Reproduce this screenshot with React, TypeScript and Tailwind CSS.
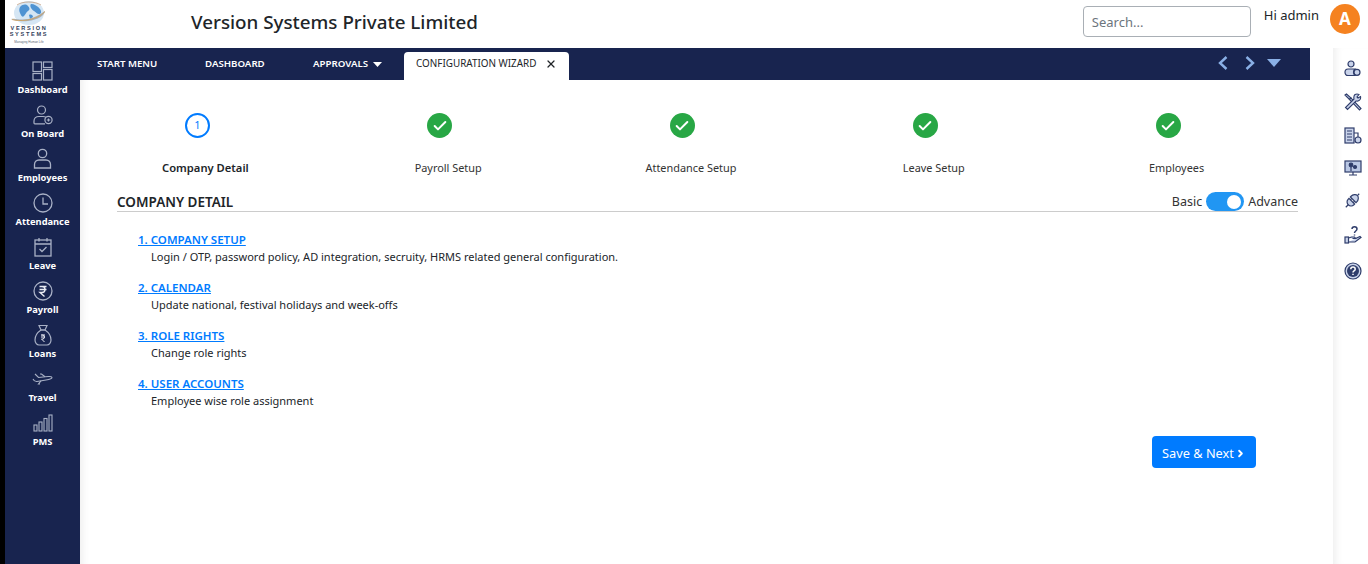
import { Check, ChevronRight, X } from 'lucide-react'

const font = "font-['Noto_Sans','Open_Sans',sans-serif]"

// Left menu icons
const DashboardIcon = () => (
  <svg width="21" height="20" viewBox="0 0 21 20" fill="none" stroke="#a9b1c6" strokeWidth="1.200">
    <rect x="1" y="1" width="8.500" height="9.500" />
    <rect x="11.500" y="1" width="8.500" height="5.500" />
    <rect x="1" y="12.500" width="8.500" height="6.500" />
    <rect x="11.500" y="8.500" width="8.500" height="10.500" />
  </svg>
)

const OnBoardIcon = () => (
  <svg width="22" height="20" viewBox="0 0 22 20" fill="none" stroke="#a9b1c6" strokeWidth="1.200">
    <circle cx="9.500" cy="5" r="4" />
    <path d="M14 12.200c-1-.5-2-.7-3-.7H7c-3 0-5 2-5 4.500V18c0 .5.3.8.8.8H13" />
    <circle cx="16.500" cy="15" r="3.600" />
    <path d="M14.800 15h3.400M16.500 13.400v3.200" />
  </svg>
)

const EmployeesIcon = () => (
  <svg width="19" height="21" viewBox="0 0 18 21" fill="none" stroke="#a9b1c6" strokeWidth="1.300">
    <circle cx="9" cy="5.500" r="4.200" />
    <path d="M5.500 12h7c2.700 0 4.500 2 4.500 4.500V20H1v-3.500C1 14 2.800 12 5.500 12z" />
  </svg>
)

const AttendanceIcon = () => (
  <svg width="20" height="20" viewBox="0 0 20 20" fill="none" stroke="#a9b1c6" strokeWidth="1.300">
    <circle cx="10" cy="10" r="9" />
    <path d="M10 4.500V11h5" />
  </svg>
)

const LeaveIcon = () => (
  <svg width="18" height="20" viewBox="0 0 18 20" fill="none" stroke="#a9b1c6" strokeWidth="1.300">
    <rect x="1" y="3" width="16" height="16" />
    <path d="M1 7h16M5 1v3.500M13 1v3.500" />
    <path d="M5.500 12l2.500 2.500 4.500-4.500" />
  </svg>
)

const PayrollIcon = () => (
  <svg width="20" height="20" viewBox="0 0 20 20" fill="none" stroke="#a9b1c6" strokeWidth="1.300">
    <circle cx="10" cy="10" r="9" />
    <path d="M6.500 5.500h7M6.500 8.500h7M7 5.500h2a3 3 0 0 1 0 6H7l4.500 4" stroke="#e8eaf2" strokeWidth="1.400" />
  </svg>
)

const LoansIcon = () => (
  <svg width="18" height="22" viewBox="0 0 18 22" fill="none" stroke="#a9b1c6" strokeWidth="1.200">
    <path d="M5 1.500h8l-2 4.500H7z" />
    <path d="M7 6h4c3 2 6 6 6 10 0 3-2 5-4 5H5c-2 0-4-2-4-5 0-4 3-8 6-10z" />
    <path d="M7 11h4M7 13h4M7.500 11h1a2 2 0 0 1 0 4h-1l3 3" stroke="#e8eaf2" strokeWidth="1" />
  </svg>
)

const TravelIcon = () => (
  <svg width="21" height="12" viewBox="0 0 21 12" fill="none" stroke="#a9b1c6" strokeWidth="1.100">
    <path d="M3 1l3.500 3.500 7-.8c3-.4 6.500-.2 6.500.8s-3 2-6 2.500L5 8.500c-1.500.2-3-.5-4-2.500" />
    <path d="M8 1h1.500l3.500 2.800M9 7.800L6.500 11h1.500" />
  </svg>
)

const PmsIcon = () => (
  <svg width="20" height="18" viewBox="0 0 20 18" fill="none" stroke="#a9b1c6" strokeWidth="1.100">
    <rect x="1" y="11" width="3" height="6" />
    <rect x="6" y="8" width="3" height="9" />
    <rect x="11" y="4.500" width="3" height="12.500" />
    <rect x="16" y="1" width="3" height="16" />
  </svg>
)

// Right rail icons
const RailUser = () => (
  <svg width="17" height="17" viewBox="0 0 17 17" fill="#c9d3ea" stroke="#2f3d6b" strokeWidth="1.200">
    <circle cx="7" cy="4" r="3" />
    <path d="M4 9h7c-1 1-1.500 2-1.500 3.200S10 14.500 11 15.500H4c-2 0-3-1.500-3-3.200S2 9 4 9z" />
    <circle cx="13" cy="12.300" r="3" />
  </svg>
)

const RailTools = () => (
  <svg width="18" height="18" viewBox="0 0 18 18" fill="#c9d3ea" stroke="#2f3d6b" strokeWidth="1.100">
    <path d="M1 2l1.500-1L7 5 5.500 6.500z" />
    <path d="M5.500 6.500L7 5l10 10.500L15.500 17z" />
    <path d="M11 1.500c2-1 4 0 4 0l-2 2.500 1 1 2.500-1.500c.5 2-.5 4-2.500 4.500-1 .2-1.500 0-2 0L3.500 16.500 1.500 14.500 10 6c-.3-1.500-.2-3.500 1-4.500z" />
  </svg>
)

const RailBuilding = () => (
  <svg width="18" height="17" viewBox="0 0 18 17" fill="#c9d3ea" stroke="#2f3d6b" strokeWidth="1.200">
    <rect x="1" y="1" width="9" height="15" />
    <path d="M3 4h5M3 7h5M3 10h5M3 13h5" />
    <path d="M10 6h4v4" fill="none" />
    <circle cx="14" cy="13" r="3" />
  </svg>
)

const RailMonitor = () => (
  <svg width="18" height="16" viewBox="0 0 18 16" fill="#b9c7e4" stroke="#2f3d6b" strokeWidth="1.200">
    <rect x="1" y="1" width="16" height="11" />
    <path d="M9 12v3M5 15h8" />
    <circle cx="7" cy="5" r="1.800" fill="#2f3d6b" />
    <circle cx="11" cy="7" r="1.500" fill="#2f3d6b" />
    <path d="M7 7v4" />
  </svg>
)

const RailPlug = () => (
  <svg width="17" height="17" viewBox="0 0 17 17" fill="#c9d3ea" stroke="#2f3d6b" strokeWidth="1.200">
    <g transform="rotate(-45 8.500 8.500)">
      <path d="M-1 8.500h3.500M15.500 8.500H18" fill="none" />
      <path d="M7.500 4.500H6.500c-2.500 0-4 2-4 4s1.500 4 4 4h1z" />
      <path d="M9.500 4.500h1c2.500 0 5 2 5 4s-2.500 4-5 4h-1z" />
      <path d="M7.500 6.500h2M7.500 10.500h2" fill="none" />
    </g>
  </svg>
)

const RailHand = () => (
  <svg className="mt-[1px]" width="18" height="18" viewBox="0 0 18 18" fill="#c9d3ea" stroke="#2f3d6b" strokeWidth="1.200">
    <rect x="1" y="11" width="3.500" height="6" />
    <path d="M4.500 12l3-1h3l1 1.500H8.500M11.500 12.500l4.500-2 1 1-6 4.500H4.500" />
    <path d="M8 3c0-3 5-3 5 0 0 2-2.500 2-2.500 4M10.500 8.500v1" fill="none" strokeWidth="1.500" />
  </svg>
)

const RailHelp = () => (
  <svg className="mt-[2px]" width="18" height="18" viewBox="0 0 18 18">
    <circle cx="9" cy="9" r="8" fill="#c9d3ea" stroke="#2f3d6b" strokeWidth="1.200" />
    <circle cx="9" cy="9" r="6" fill="#2f3d6b" />
    <path d="M6.800 7.200c0-2.800 4.400-2.800 4.400 0 0 1.800-2.200 1.600-2.200 3.200M9 11.800v1.300" fill="none" stroke="#fff" strokeWidth="1.500" />
  </svg>
)

const Logo = () => (
  <svg width="40" height="46" viewBox="0 0 40 46">
    <ellipse cx="21" cy="12" rx="15" ry="12" fill="#d5e6f4" />
    <path d="M12 6c3-3 6-3 8-1s2 4 0 5-2 3-4 5-3-1-4-3-1-4 0-6zM23 3c3 0 7 2 9 5s1 5-1 5-3-2-5-3-5-5-3-7zM21 14c2-1 4 0 4 2l-3 2z" fill="#4f93d2" />
    <path d="M3 18c4-1 5 .5 12 .5S30 15 37 10c0 4-7 9-17 10-6 .6-14 0-17-2z" fill="#a7b0bb" />
    <path d="M4 18.500c6 2 24 2 33-8" fill="none" stroke="#d6a256" strokeWidth="0.800" />
    <path d="M9 4c5-4 18-4 24 0" fill="none" stroke="#c79f82" strokeWidth="0.800" />
    <text x="21" y="29" textAnchor="middle" fontSize="5.600" fontWeight="700" letterSpacing="1.700" fill="#33415a" fontFamily="Liberation Sans, sans-serif">VERSION</text>
    <text x="21" y="35" textAnchor="middle" fontSize="5.600" fontWeight="700" letterSpacing="1.700" fill="#33415a" fontFamily="Liberation Sans, sans-serif">SYSTEMS</text>
    <text x="21" y="41.500" textAnchor="middle" fontSize="3" fill="#5a6675" fontFamily="Liberation Sans, sans-serif">Managing Human Life</text>
  </svg>
)

const menuItems = [
  { label: 'Dashboard', icon: <DashboardIcon /> },
  { label: 'On Board', icon: <OnBoardIcon /> },
  { label: 'Employees', icon: <EmployeesIcon /> },
  { label: 'Attendance', icon: <AttendanceIcon /> },
  { label: 'Leave', icon: <LeaveIcon /> },
  { label: 'Payroll', icon: <PayrollIcon /> },
  { label: 'Loans', icon: <LoansIcon /> },
  { label: 'Travel', icon: <TravelIcon /> },
  { label: 'PMS', icon: <PmsIcon /> },
]

const steps = [
  { label: 'Company Detail', active: true },
  { label: 'Payroll Setup' },
  { label: 'Attendance Setup' },
  { label: 'Leave Setup' },
  { label: 'Employees' },
]

const links = [
  { title: '1. COMPANY SETUP', text: 'Login / OTP, password policy, AD integration, secruity, HRMS related general configuration.' },
  { title: '2. CALENDAR', text: 'Update national, festival holidays and week-offs' },
  { title: '3. ROLE RIGHTS', text: 'Change role rights' },
  { title: '4. USER ACCOUNTS', text: 'Employee wise role assignment' },
]

export default function App() {
  return (
    <div className={`${font} flex h-[564px] w-[1368px] overflow-hidden bg-white text-[#212529]`}>
      <div className="w-[5px] shrink-0 bg-black" />
      <div className="flex min-w-0 flex-1 flex-col">
        {/* Header */}
        <header className="flex h-[48px] shrink-0 items-center bg-white">
          <div className="ml-[3px] w-[183px] shrink-0">
            <Logo />
          </div>
          <h1 className="mb-[4px] text-[18.800px] font-medium leading-none text-[#212529]">Version Systems Private Limited</h1>
          <div className="mb-[6px] ml-auto flex items-center">
            <div className="flex h-[31px] w-[168px] items-center rounded border border-[#a9afb5] px-2 pt-[3px] text-[13px] text-[#6c757d]">Search...</div>
            <span className="mb-[10px] ml-[13px] text-[13px] text-[#212529]">Hi admin</span>
            <div className="mb-[4px] ml-[11px] mr-[8px] flex h-[30px] w-[30px] items-center justify-center rounded-full bg-[#f58220] text-[17px] font-bold text-white">A</div>
          </div>
        </header>

        <div className="flex min-h-0 flex-1">
          {/* Left menu */}
          <nav className="flex w-[75px] shrink-0 flex-col items-center bg-[#18244f] pt-[5px]">
            {menuItems.map((item) => (
              <div key={item.label} className="flex h-[44px] w-full flex-col items-center justify-end">
                <div className="mb-[2px] flex h-[21px] items-center justify-center">{item.icon}</div>
                <span className="text-[9.300px] font-bold leading-[14px] text-white">{item.label}</span>
              </div>
            ))}
          </nav>

          {/* Main */}
          <main className="flex w-[1230px] shrink-0 flex-col">
            <div className="flex h-[32px] shrink-0 items-end bg-[#18244f] text-[9.700px] font-semibold">
              <div className="flex h-[32px] w-[125px] items-center pl-[17px] text-white">START MENU</div>
              <div className="flex h-[32px] w-[108px] items-center text-white">DASHBOARD</div>
              <div className="flex h-[32px] w-[91px] items-center text-white">
                APPROVALS
                <svg className="ml-[5px]" width="9" height="5" viewBox="0 0 9 5"><path d="M0 0h9L4.500 5z" fill="#fff" /></svg>
              </div>
              <div className="flex h-[28px] w-[165px] items-center rounded-t bg-white pb-[5px] pl-[12px] text-[9.900px] font-normal text-[#212529]">
                CONFIGURATION WIZARD
                <X className="ml-[9px]" size={12} strokeWidth={2.500} />
              </div>
              <div className="ml-auto mr-[29px] flex h-[32px] items-center gap-[17px] pb-[2px]">
                <svg width="10" height="14" viewBox="0 0 10 14" fill="none" stroke="#8ab0e6" strokeWidth="2.400"><path d="M8.500 1L2 7l6.500 6" /></svg>
                <svg width="10" height="14" viewBox="0 0 10 14" fill="none" stroke="#8ab0e6" strokeWidth="2.400"><path d="M1.500 1L8 7l-6.500 6" /></svg>
                <svg className="-ml-[5px]" width="14" height="8" viewBox="0 0 14 8"><path d="M0 0h14L7 8z" fill="#8ab0e6" /></svg>
              </div>
            </div>

            <div className="flex-1 pl-[37px] pr-[12px] shadow-[inset_10px_0_8px_-8px_rgba(0,0,0,0.08)]">
              {/* Stepper */}
              <div className="-ml-[33px] grid grid-cols-5 pt-[33px]">
                {steps.map((step) => (
                  <div key={step.label} className="flex flex-col items-center">
                    {step.active ? (
                      <div className="mr-[16px] flex h-[25px] w-[25px] items-center justify-center rounded-full border-2 border-[#007bff] text-[11px] text-[#007bff]">1</div>
                    ) : (
                      <div className="mr-[17px] flex h-[25px] w-[25px] items-center justify-center rounded-full bg-[#28a745] text-white">
                        <Check size={16} strokeWidth={3} />
                      </div>
                    )}
                    <span className={`mt-[22px] leading-[16px] ${step.active ? 'text-[11.200px] font-semibold text-[#212529]' : 'text-[10.900px] text-[#333]'}`}>{step.label}</span>
                  </div>
                ))}
              </div>

              {/* Section head */}
              <div className="mt-[16px] flex h-[20px] items-center justify-between border-b border-[#cccccc]">
                <span className="mt-[2px] text-[13.500px] font-semibold text-[#212529]">COMPANY DETAIL</span>
                <div className="flex items-center text-[12.500px] text-[#333]">
                  <span className="mt-[2px]">Basic</span>
                  <div className="mx-[4px] flex h-[19px] w-[38px] items-center justify-end rounded-full bg-[#2196f3] pr-[3px]">
                    <div className="h-[14px] w-[14px] rounded-full bg-white" />
                  </div>
                  <span className="mt-[2px]">Advance</span>
                </div>
              </div>

              {/* Links */}
              <div className="flex flex-col gap-[15px] pl-[21px] pt-[20px]">
                {links.map((link) => (
                  <div key={link.title}>
                    <a className="block text-[11.500px] font-semibold leading-[16px] text-[#007bff] underline">{link.title}</a>
                    <p className="pl-[13px] text-[11px] leading-[17px] text-[#212529]">{link.text}</p>
                  </div>
                ))}
              </div>

              <div className="mr-[42px] mt-[27px] flex justify-end">
                <button className="flex h-[32px] w-[104px] items-center justify-center rounded bg-[#007bff] pt-[3px] text-[12.750px] text-white">
                  Save &amp; Next
                  <ChevronRight className="ml-[1px]" size={11} strokeWidth={4} />
                </button>
              </div>
            </div>
          </main>

          <div className="w-[23px] shrink-0" />

          {/* Right rail */}
          <aside className="flex w-[35px] shrink-0 flex-col items-center gap-[16px] pl-[4px] pt-[12px] shadow-[inset_8px_0_8px_-6px_rgba(0,0,0,0.08)]">
            <RailUser />
            <RailTools />
            <RailBuilding />
            <RailMonitor />
            <RailPlug />
            <RailHand />
            <RailHelp />
          </aside>
        </div>
      </div>
    </div>
  )
}
